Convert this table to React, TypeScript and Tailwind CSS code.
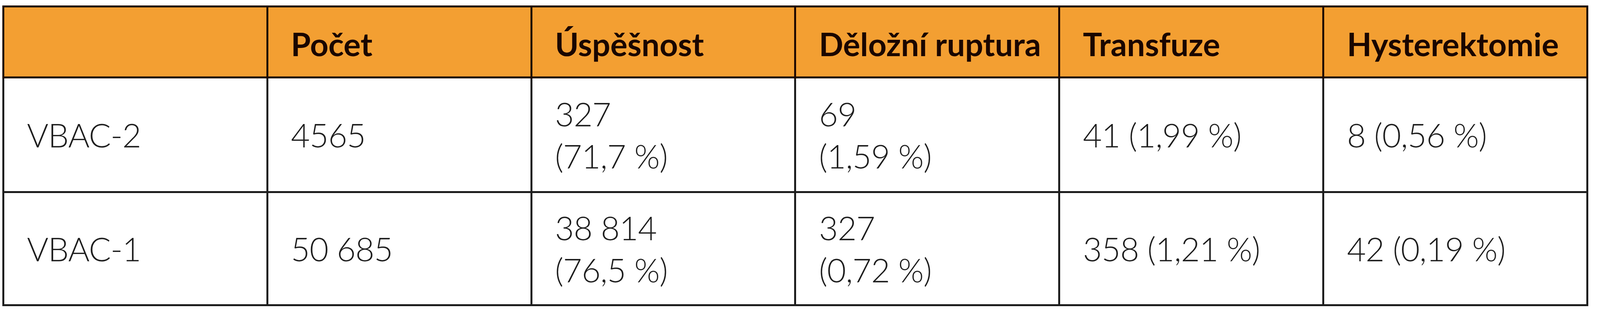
const headers = ['', 'Počet', 'Úspěšnost', 'Děložní ruptura', 'Transfuze', 'Hysterektomie'];

const rows: string[][][] = [
  [['VBAC-2'], ['4565'], ['327', '(71,7 %)'], ['69', '(1,59 %)'], ['41 (1,99 %)'], ['8 (0,56 %)']],
  [['VBAC-1'], ['50 685'], ['38 814', '(76,5 %)'], ['327', '(0,72 %)'], ['358 (1,21 %)'], ['42 (0,19 %)']],
];

export default function App() {
  return (
    <div className="w-full h-[800px] bg-white pt-[14px]" style={{ fontFamily: 'Lato, "Noto Sans", sans-serif' }}>
      <table className="ml-[6px] w-[calc(100%-36px)] table-fixed border-collapse">
        <thead>
          <tr>
            {headers.map((h, i) => (
              <th
                key={i}
                className="h-[182px] border-[5px] border-[#1f0900] bg-[#f39f32] pl-[58px] pt-[8px] text-left align-middle text-[82px] font-bold leading-none text-[#1a0600]"
              >
                {h}
              </th>
            ))}
          </tr>
        </thead>
        <tbody>
          {rows.map((row, r) => (
            <tr key={r}>
              {row.map((cell, c) => (
                <td
                  key={c}
                  className={`${r === 0 ? 'h-[294px]' : 'h-[290px]'} border-[5px] border-[#1c1c1c] pl-[58px] align-middle text-[84px] font-light leading-[108px] tracking-[-1px] text-[#1e1e1e]`}
                >
                  {cell.map((line, k) => (
                    <div key={k}>{line}</div>
                  ))}
                </td>
              ))}
            </tr>
          ))}
        </tbody>
      </table>
    </div>
  );
}
